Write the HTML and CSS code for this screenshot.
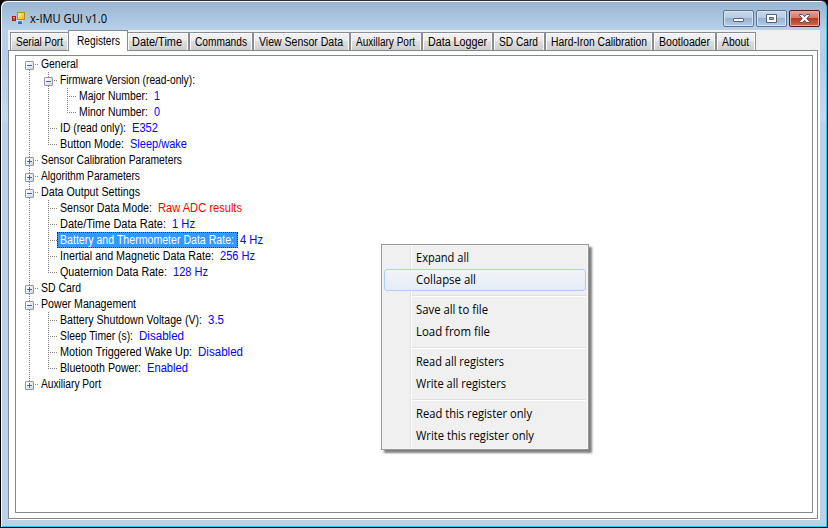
FILE: index.html
```
<!DOCTYPE html>
<html lang="en">
<head>
<meta charset="utf-8">
<title>x-IMU GUI v1.0</title>
<link rel="stylesheet" href="styles.css">
</head>
<body>
<div class="window">
  <header class="titlebar">
    <svg class="app-icon" width="14" height="14" viewBox="0 0 14 14">
      <defs><linearGradient id="gold" x2="1" y2="1"><stop stop-color="#fff3a0"/><stop offset="1" stop-color="#f0b400"/></linearGradient></defs>
      <rect x="5.500" y=".5" width="7" height="7" fill="url(#gold)" stroke="#b88a18"/>
      <rect x=".5" y="4.500" width="3" height="4" fill="#dc4a30" stroke="#9c1c10"/>
      <rect x="1" y="5" width="2" height="1" fill="#f4a090"/>
      <rect x="5.500" y="8.500" width="5" height="3" fill="#5c90e8" stroke="#f0f5ff" stroke-width=".6"/>
      <rect x="6" y="10" width="4" height="2" fill="#3468c8"/>
    </svg>
    <span class="title" data-w="77">x-IMU GUI v1.0</span>
    <div class="controls">
      <div class="control"><svg width="31" height="17"><rect x="10.500" y="8.500" width="10" height="3" rx=".5" fill="#fff" stroke="#566078"/></svg></div>
      <div class="control"><svg width="31" height="17"><path d="M10.500 4.500h10v8h-10zM13.500 7.500v2h4v-2z" fill="#fff" fill-rule="evenodd" stroke="#566078"/></svg></div>
      <div class="control close"><svg width="31" height="17"><path d="M10.500 4.500h3l2 2.200 2-2.200h3v1l-2.700 3 2.700 3v1h-3l-2-2.200-2 2.200h-3v-1l2.700-3-2.700-3z" fill="#fff" stroke="#5b4b5c"/></svg></div>
    </div>
  </header>
  <main class="client">
    <nav class="tabs">
      <div class="tab t1"><span data-w="47">Serial Port</span></div>
      <div class="tab t2 active"><span data-w="43">Registers</span></div>
      <div class="tab t3"><span data-w="50">Date/Time</span></div>
      <div class="tab t4"><span data-w="52">Commands</span></div>
      <div class="tab t5"><span data-w="84">View Sensor Data</span></div>
      <div class="tab t6"><span data-w="59">Auxillary Port</span></div>
      <div class="tab t7"><span data-w="59">Data Logger</span></div>
      <div class="tab t8"><span data-w="39">SD Card</span></div>
      <div class="tab t9"><span data-w="96">Hard-Iron Calibration</span></div>
      <div class="tab t10"><span data-w="51">Bootloader</span></div>
      <div class="tab t11"><span data-w="27">About</span></div>
    </nav>
    <section class="page">
      <ul class="tree">
        <li><div class="row open"><span data-w="37">General</span></div>
          <ul>
            <li><div class="row open"><span data-w="135">Firmware Version (read-only):</span></div>
              <ul>
                <li><div class="row"><span data-w="69">Major Number:</span><b data-w="6">1</b></div></li>
                <li><div class="row"><span data-w="69">Minor Number:</span><b data-w="6">0</b></div></li>
              </ul>
            </li>
            <li><div class="row"><span data-w="66">ID (read only):</span><b data-w="26">E352</b></div></li>
            <li><div class="row"><span data-w="64">Button Mode:</span><b data-w="57">Sleep/wake</b></div></li>
          </ul>
        </li>
        <li><div class="row shut"><span data-w="141">Sensor Calibration Parameters</span></div></li>
        <li><div class="row shut"><span data-w="99">Algorithm Parameters</span></div></li>
        <li><div class="row open"><span data-w="99">Data Output Settings</span></div>
          <ul>
            <li><div class="row"><span data-w="92">Sensor Data Mode:</span><b class="alert" data-w="84">Raw ADC results</b></div></li>
            <li><div class="row"><span data-w="106">Date/Time Data Rate:</span><b data-w="23">1 Hz</b></div></li>
            <li><div class="row selected"><div class="mark"><span data-w="174">Battery and Thermometer Data Rate:</span></div><b data-w="23">4 Hz</b></div></li>
            <li><div class="row"><span data-w="154">Inertial and Magnetic Data Rate:</span><b data-w="35">256 Hz</b></div></li>
            <li><div class="row"><span data-w="107">Quaternion Data Rate:</span><b data-w="35">128 Hz</b></div></li>
          </ul>
        </li>
        <li><div class="row shut"><span data-w="40">SD Card</span></div></li>
        <li><div class="row open"><span data-w="95">Power Management</span></div>
          <ul>
            <li><div class="row"><span data-w="142">Battery Shutdown Voltage (V):</span><b data-w="16">3.5</b></div></li>
            <li><div class="row"><span data-w="73">Sleep Timer (s):</span><b data-w="45">Disabled</b></div></li>
            <li><div class="row"><span data-w="132">Motion Triggered Wake Up:</span><b data-w="45">Disabled</b></div></li>
            <li><div class="row"><span data-w="81">Bluetooth Power:</span><b data-w="41">Enabled</b></div></li>
          </ul>
        </li>
        <li><div class="row shut"><span data-w="60">Auxiliary Port</span></div></li>
      </ul>
    </section>
  </main>
  <div class="menu">
    <div class="item"><span data-w="53">Expand all</span></div>
    <div class="item hover"><span data-w="60">Collapse all</span></div>
    <div class="sep"></div>
    <div class="item"><span data-w="72">Save all to file</span></div>
    <div class="item"><span data-w="74">Load from file</span></div>
    <div class="sep"></div>
    <div class="item"><span data-w="88">Read all registers</span></div>
    <div class="item"><span data-w="90">Write all registers</span></div>
    <div class="sep"></div>
    <div class="item"><span data-w="116">Read this register only</span></div>
    <div class="item"><span data-w="118">Write this register only</span></div>
  </div>
</div>
<script src="fit.js"></script>
</body>
</html>
```
FILE: fit.js
```
document.querySelectorAll('[data-w]').forEach(function (el) {
  var width = Number(el.dataset.w);
  var natural = el.getBoundingClientRect().width;
  el.style.width = width + 'px';
  el.style.transform = 'scaleX(' + width / natural + ')';
});
```
FILE: styles.css
```
*, *::before, *::after { box-sizing: border-box; }
body { margin: 0; background: #000; overflow: hidden; font: 12px/16px "Liberation Sans", Arial, sans-serif; color: #000; }
ul { list-style: none; margin: 0; padding: 0; }
span, b { display: inline-block; white-space: pre; font-weight: normal; flex: none; transform-origin: 0 0; vertical-align: top; }
svg { display: block; }

.window {
  position: relative; width: 828px; height: 528px; padding: 0 6px 7px 7px;
  border: 1px solid #000; border-top-color: #302e38; border-radius: 7px 7px 0 0;
  background: linear-gradient(#99b4d1 0, #b9d1ea 30px, #b4cde8 60px, #c6daee 118px, #b9d1ea 122px, #b9d1ea);
  box-shadow: inset 1px 1px #f4f8fc, inset -1px -1px #27cde8;
}
.titlebar { display: flex; align-items: flex-start; height: 29px; padding: 9px 1px 0 3px; }
.app-icon { margin-top: 2px; margin-left: 1px; }
.title { font: 12px/16px "Open Sans", "Noto Sans", sans-serif; margin: 1px 0 0 4px; }
.controls { display: flex; gap: 2px; margin-left: auto; }
.control {
  width: 31px; height: 17px; border: 1px solid #5c7494; border-radius: 2px;
  background: linear-gradient(#c8daec 0, #b5cae1 47%, #98b3d0 50%, #b4cde6 100%);
  box-shadow: inset 0 0 0 1px #d5e4f3;
}
.control svg { margin: -1px; }
.close { border-color: #52181c; background: linear-gradient(#e5a194 0, #d4796a 47%, #b83b22 50%, #cf6a4d 100%); box-shadow: inset 0 0 0 1px #e6aca2; }

.client { height: 490px; width: 812px; background: #f0f0f0; padding-bottom: 1px; }
.tabs { display: flex; align-items: flex-end; height: 20px; padding-left: 2px; }
.tab {
  height: 18px; border: 1px solid #898c95; border-bottom: 0; padding: 1px 0 0 5px;
  background: linear-gradient(#f2f2f2 0, #ebebeb 48%, #dddddd 50%, #cfcfcf 100%);
  box-shadow: inset 1px 1px #fcfcfc, inset -1px 0 #fcfcfc; line-height: 16px;
}
.tab.active { position: relative; height: 21px; margin: 0 -1px -1px; padding: 2px 0 0 8px; background: #fff; }
.t1 { width: 59px; } .t2 { width: 60px; } .t3 { width: 62px; } .t4 { width: 64px; }
.t5 { width: 97px; } .t6 { width: 72px; } .t7 { width: 71px; } .t8 { width: 52px; }
.t9 { width: 108px; } .t10 { width: 63px; } .t11 { width: 40px; }
.tab.t3 { padding-left: 4px; }

.page { width: 810px; height: 469px; border: 1px solid #828790; background: #fff; padding: 4px 4px 5px 6px; box-shadow: 2px 1px #fff; }
.tree { width: 798px; height: 458px; border: 1px solid #828790; padding-left: 13px; }
.tree li { padding-left: 12px; background: repeating-linear-gradient(#808080 0 1px, transparent 1px 2px) 0 0 / 1px 100% no-repeat; }
.tree li:last-child { background-size: 1px 9px; }
.tree > li:first-child { background-position: 0 8px; }
.tree li ul { padding-left: 7px; }
.row { position: relative; display: flex; gap: 6px; height: 16px; }
.row::before { content: ""; position: absolute; left: -12px; top: 8px; width: 9px; height: 1px; background: repeating-linear-gradient(90deg, #808080 0 1px, transparent 1px 2px); }
.open::after, .shut::after {
  content: ""; position: absolute; left: -16px; top: 5px; width: 9px; height: 9px; border: 1px solid #969696; border-radius: 1px;
  background:
    linear-gradient(#4b63a7, #4b63a7) 1px 3px / 5px 1px no-repeat,
    linear-gradient(135deg, #fff, #d8d8d8);
}
.shut::after {
  background:
    linear-gradient(#4b63a7, #4b63a7) 1px 3px / 5px 1px no-repeat,
    linear-gradient(#4b63a7, #4b63a7) 3px 1px / 1px 5px no-repeat,
    linear-gradient(135deg, #fff, #d8d8d8);
}
.row b { color: #00f; }
.row .alert { color: #f00; }
.mark { width: 181px; height: 16px; color: #fff; background: #39f; margin-left: -3px; padding-left: 3px; outline: 1px dotted #102040; outline-offset: -1px; }
.selected { gap: 2px; }

.menu {
  position: absolute; left: 380px; top: 243px; width: 208px; height: 206px; padding: 2px;
  border: 1px solid #979797; box-shadow: inset 0 0 0 1px #f5f5f5, 3px 3px 2px rgba(0,0,0,.5);
  background: linear-gradient(90deg, #f0f0f0 28px, #e2e3e3 28px 29px, #fff 29px 30px, #f0f0f0 30px);
  font: 12px/22px "Open Sans", "Noto Sans", sans-serif;
}
.item { height: 22px; padding-left: 32px; }
.item.hover { border: 1px solid #aecff7; border-radius: 3px; padding-left: 31px; line-height: 20px; background: linear-gradient(rgba(242,246,251,.8), rgba(226,235,247,.8)); }
.sep { height: 8px; margin-left: 28px; background: linear-gradient(transparent 4px, #e0e0e0 4px 5px, #fff 5px 6px, transparent 6px); }
```
